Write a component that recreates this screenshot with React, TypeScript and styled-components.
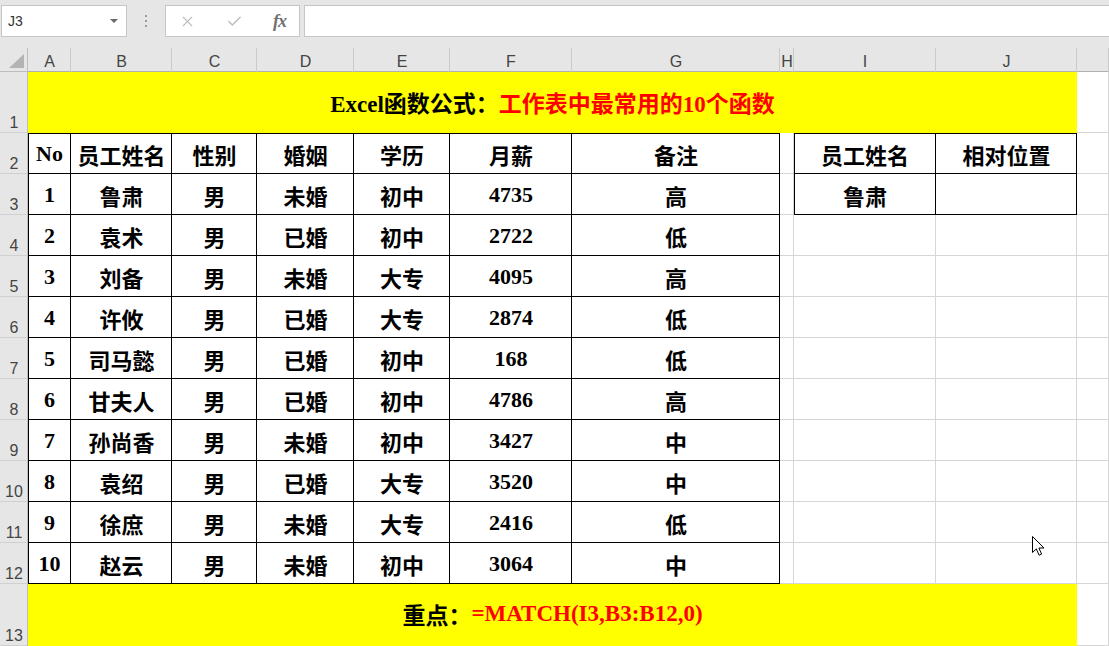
import React from 'react';
import styled, { createGlobalStyle, css } from 'styled-components';
import { X, Check } from 'lucide-react';

const GlobalStyle = createGlobalStyle`
  html, body { margin: 0; padding: 0; background: #fff; overflow: hidden; }
  #root { width: 1109px; height: 646px; }
`;

const Frame = styled.div`
  width: 1109px;
  height: 646px;
  overflow: hidden;
  position: relative;
  display: flex;
  flex-direction: column;
  background: #fff;
`;

const TopBar = styled.div`
  height: 48px;
  flex: none;
  box-sizing: border-box;
  padding-top: 5px;
  background: #e6e6e6;
  display: flex;
  align-items: flex-start;
`;

const Field = styled.div`
  height: 32px;
  box-sizing: border-box;
  background: #fff;
  border: 1px solid #c6c6c6;
  display: flex;
  align-items: center;
`;

const NameBox = styled(Field)`
  width: 126px;
  margin-left: 1px;
  padding: 0 8px 0 6px;
  justify-content: space-between;
  font-family: "Liberation Sans", Arial, sans-serif;
  font-size: 14px;
  color: #333;
`;

const Caret = styled.span`
  width: 0;
  height: 0;
  border-left: 4px solid transparent;
  border-right: 4px solid transparent;
  border-top: 4px solid #6a6a6a;
`;

const Grip = styled.div`
  width: 38px;
  height: 32px;
  display: flex;
  flex-direction: column;
  align-items: center;
  justify-content: center;
  gap: 3px;
`;

const GripDot = styled.span`
  width: 2px;
  height: 2px;
  background: #9c9c9c;
`;

const FxBox = styled(Field)`
  width: 135px;
  padding-left: 13px;
  gap: 30px;
  color: #bdbdbd;
`;

const FxMark = styled.span`
  font-family: "Liberation Serif", serif;
  font-style: italic;
  font-weight: 700;
  font-size: 18px;
  color: #707070;
  letter-spacing: -1px;
`;

const FormulaInput = styled(Field)`
  flex: 1;
  margin-left: 4px;
  border-right: none;
`;

const Sheet = styled.div`
  flex: 1;
  display: grid;
  grid-template-columns: 28px 43px 101px 85px 97px 96px 122px 208px 14px 142px 141px 1fr;
  grid-template-rows: 24px 61px repeat(11, 41px) 62px;
`;

const Corner = styled.div`
  position: relative;
  background: #e6e6e6;
  box-shadow: inset -1px -1px 0 #bdbdbd;
  &::after {
    content: '';
    position: absolute;
    right: 4px;
    bottom: 4px;
    border-style: solid;
    border-width: 0 0 14px 15px;
    border-color: transparent transparent #b4b4b4 transparent;
  }
`;

const headFont = css`
  font-family: "Liberation Sans", Arial, sans-serif;
  font-size: 16px;
  color: #444;
  background: #e6e6e6;
`;

const ColHead = styled.div`
  ${headFont}
  display: flex;
  align-items: center;
  justify-content: center;
  padding-top: 4px;
  box-sizing: border-box;
  box-shadow: inset -1px 0 0 #cacaca, inset 0 -1px 0 #b0b0b0;
`;

const RowHead = styled.div`
  ${headFont}
  display: flex;
  align-items: flex-end;
  justify-content: center;
  padding-bottom: 1px;
  box-sizing: border-box;
  box-shadow: inset -1px 0 0 #bdbdbd, inset 0 -1px 0 #d0d0d0;
`;

type Kind = 'grid' | 'table' | 'banner';

const Cell = styled.div<{ $kind: Kind; $top?: boolean; $left?: boolean; $span?: number }>`
  display: flex;
  align-items: center;
  justify-content: center;
  min-width: 0;
  box-sizing: border-box;
  white-space: nowrap;
  font-family: "Liberation Serif", "Noto Sans CJK SC", serif;
  font-weight: 700;
  font-size: 22px;
  color: #000;
  ${(p) => p.$span && css`grid-column: span ${p.$span};`}
  ${(p) => p.$kind === 'grid' && css`box-shadow: inset -1px -1px 0 #d6d6d6;`}
  ${(p) => p.$kind === 'banner' && css`background: #ffff00; font-size: 23px; padding-bottom: 2px;`}
  ${(p) =>
    p.$kind === 'table' &&
    css`
      box-shadow: inset -1px -1px 0 #000 ${p.$top ? ', inset 0 1px 0 #000' : ''} ${p.$left ? ', inset 1px 0 0 #000' : ''};
    `}
`;

const Red = styled.span`
  color: #ff0000;
`;

const Pointer = styled.svg`
  position: absolute;
  left: 1032px;
  top: 536px;
`;

const columns = ['A', 'B', 'C', 'D', 'E', 'F', 'G', 'H', 'I', 'J', ''];

const header = ['No', '员工姓名', '性别', '婚姻', '学历', '月薪', '备注'];
const rows: string[][] = [
  ['1', '鲁肃', '男', '未婚', '初中', '4735', '高'],
  ['2', '袁术', '男', '已婚', '初中', '2722', '低'],
  ['3', '刘备', '男', '未婚', '大专', '4095', '高'],
  ['4', '许攸', '男', '已婚', '大专', '2874', '低'],
  ['5', '司马懿', '男', '已婚', '初中', '168', '低'],
  ['6', '甘夫人', '男', '已婚', '初中', '4786', '高'],
  ['7', '孙尚香', '男', '未婚', '初中', '3427', '中'],
  ['8', '袁绍', '男', '已婚', '大专', '3520', '中'],
  ['9', '徐庶', '男', '未婚', '大专', '2416', '低'],
  ['10', '赵云', '男', '未婚', '初中', '3064', '中'],
];

const lookup: string[][] = [
  ['员工姓名', '相对位置'],
  ['鲁肃', ''],
];

export default function App() {
  const body = [header, ...rows];
  return (
    <Frame>
      <GlobalStyle />
      <TopBar>
        <NameBox>
          <span>J3</span>
          <Caret />
        </NameBox>
        <Grip>
          <GripDot />
          <GripDot />
          <GripDot />
        </Grip>
        <FxBox>
          <X size={17} strokeWidth={1.6} />
          <Check size={17} strokeWidth={2} />
          <FxMark>fx</FxMark>
        </FxBox>
        <FormulaInput />
      </TopBar>
      <Sheet>
        <Corner />
        {columns.map((c, i) => (
          <ColHead key={i}>{c}</ColHead>
        ))}

        <RowHead>1</RowHead>
        <Cell $kind="banner" $span={10}>
          Excel函数公式：<Red>工作表中最常用的10个函数</Red>
        </Cell>
        <Cell $kind="grid" />

        {body.map((r, ri) => (
          <React.Fragment key={ri}>
            <RowHead>{ri + 2}</RowHead>
            {r.map((v, ci) => (
              <Cell key={ci} $kind="table" $top={ri === 0} $left={ci === 0}>
                {v}
              </Cell>
            ))}
            <Cell $kind="grid" />
            {ri < lookup.length ? (
              lookup[ri].map((v, ci) => (
                <Cell key={'l' + ci} $kind="table" $top={ri === 0} $left={ci === 0}>
                  {v}
                </Cell>
              ))
            ) : (
              <>
                <Cell $kind="grid" />
                <Cell $kind="grid" />
              </>
            )}
            <Cell $kind="grid" />
          </React.Fragment>
        ))}

        <RowHead>13</RowHead>
        <Cell $kind="banner" $span={10}>
          重点：<Red>=MATCH(I3,B3:B12,0)</Red>
        </Cell>
        <Cell $kind="grid" />
      </Sheet>
      <Pointer width="14" height="21" viewBox="0 0 14 21">
        <path
          d="M0.5 0.5 L0.5 16.5 L4.3 12.9 L7.1 19.2 L9.6 18.1 L6.9 12 L12 12 Z"
          fill="#fff"
          stroke="#000"
          strokeWidth="1"
          strokeLinejoin="miter"
        />
      </Pointer>
    </Frame>
  );
}
